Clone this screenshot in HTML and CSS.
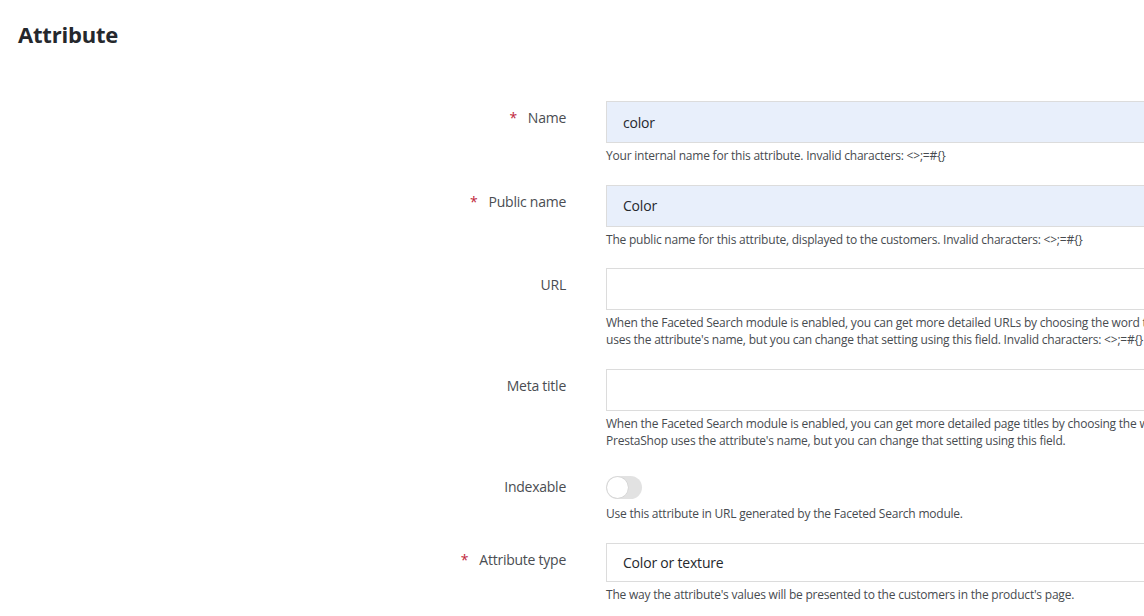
FILE: index.html
```html
<!DOCTYPE html>
<html lang="en">
<head>
<meta charset="utf-8">
<title>Attribute</title>
<link rel="stylesheet" href="styles.css">
</head>
<body>
<div class="page">
  <h1 class="title">Attribute</h1>
  <form class="form">
    <div class="row">
      <label class="label"><span class="req">*</span>Name</label>
      <div class="field">
        <input class="input filled" type="text" value="color">
        <div class="help">Your internal name for this attribute. Invalid characters: &lt;&gt;;=#{}</div>
      </div>
    </div>
    <div class="row">
      <label class="label"><span class="req">*</span>Public name</label>
      <div class="field">
        <input class="input filled" type="text" value="Color">
        <div class="help">The public name for this attribute, displayed to the customers. Invalid characters: &lt;&gt;;=#{}</div>
      </div>
    </div>
    <div class="row">
      <label class="label">URL</label>
      <div class="field">
        <input class="input" type="text" value="">
        <div class="help">When the Faceted Search module is enabled, you can get more detailed URLs by choosing the word that best represent this attribute. By default, PrestaShop<br>uses the attribute's name, but you can change that setting using this field. Invalid characters: &lt;&gt;;=#{}</div>
      </div>
    </div>
    <div class="row">
      <label class="label">Meta title</label>
      <div class="field">
        <input class="input" type="text" value="">
        <div class="help">When the Faceted Search module is enabled, you can get more detailed page titles by choosing the word that best represent this attribute. By default,<br>PrestaShop uses the attribute's name, but you can change that setting using this field.</div>
      </div>
    </div>
    <div class="row">
      <label class="label label-toggle">Indexable</label>
      <div class="field">
        <span class="toggle"><span class="knob"></span></span>
        <div class="help">Use this attribute in URL generated by the Faceted Search module.</div>
      </div>
    </div>
    <div class="row">
      <label class="label"><span class="req">*</span>Attribute type</label>
      <div class="field">
        <div class="select">Color or texture</div>
        <div class="help">The way the attribute's values will be presented to the customers in the product's page.</div>
      </div>
    </div>
  </form>
</div>
</body>
</html>
```
FILE: styles.css
```css
html, body {
  margin: 0;
  padding: 0;
  background: #fff;
  overflow: hidden;
}
body {
  font-family: "Open Sans", "Noto Sans", sans-serif;
  color: #363a41;
  width: 1144px;
  height: 616px;
}
.page {
  padding: 19px 18px 0 18px;
}
.title {
  margin: 0;
  font-size: 22px;
  line-height: 30px;
  font-weight: 700;
  color: #25282d;
  letter-spacing: -0.2px;
}
.form {
  margin-top: 52px;
  display: flex;
  flex-direction: column;
  gap: 20.5px;
}
.row {
  display: grid;
  grid-template-columns: 548px 900px;
  column-gap: 40px;
}
.label {
  text-align: right;
  font-size: 14px;
  line-height: 20px;
  padding-top: 7px;
  color: #4a4d52;
  letter-spacing: -0.25px;
}
.label-toggle {
  padding-top: 8px;
}
.req {
  color: #c0263a;
  margin-right: 11px;
}
.field {
  display: flex;
  flex-direction: column;
}
.input, .select {
  box-sizing: border-box;
  height: 42px;
  width: 900px;
  border: 1px solid #dcdcdc;
  background: #fff;
  font: inherit;
  font-size: 14px;
  color: #25282d;
  padding: 0 16px;
  margin: 0;
  outline: none;
  letter-spacing: -0.2px;
}
.filled {
  background: #e8effb;
}
.select {
  height: 39px;
  display: flex;
  align-items: center;
}
.help {
  margin-top: 4px;
  font-size: 12px;
  line-height: 17px;
  color: #474b50;
  white-space: nowrap;
  letter-spacing: -0.22px;
}
.toggle {
  display: block;
  margin-top: 7px;
  margin-bottom: 2px;
  width: 36px;
  height: 23px;
  border-radius: 12px;
  background: #e2e2e2;
  position: relative;
}
.knob {
  position: absolute;
  left: 1px;
  top: 1px;
  width: 21px;
  height: 21px;
  border-radius: 50%;
  background: #fff;
  box-shadow: 0 0 0 0.5px #d0d0d0;
}
```
